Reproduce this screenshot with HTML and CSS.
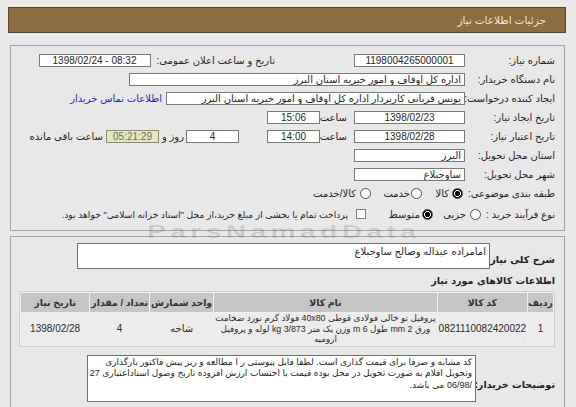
FILE: index.html
```html
<!DOCTYPE html>
<html lang="fa">
<head>
<meta charset="utf-8">
<link rel="stylesheet" href="styles.css">
</head>
<body>
<div class="page" dir="rtl">
  <div class="titlebar">جزئیات اطلاعات نیاز</div>

  <div class="panel p1">
    <div class="row">
      <span class="lbl">شماره نیاز:</span>
      <span class="fld w111 c">1198004265000001</span>
      <span class="lbl2 ml-pub">تاریخ و ساعت اعلان عمومی:</span>
      <span class="fld w112 c" dir="ltr">1398/02/24 - 08:32</span>
    </div>
    <div class="row">
      <span class="lbl">نام دستگاه خریدار:</span>
      <span class="fld w336">اداره کل اوقاف و امور خیریه استان البرز</span>
    </div>
    <div class="row">
      <span class="lbl">ایجاد کننده درخواست:</span>
      <span class="fld w299">یونس قربانی کاربردار اداره کل اوقاف و امور خیریه استان البرز</span>
      <span class="link">اطلاعات تماس خریدار</span>
    </div>
    <div class="row">
      <span class="lbl">تاریخ ایجاد نیاز:</span>
      <span class="fld w111 c">1398/02/23</span>
      <span class="txt t-hour m7">ساعت</span>
      <span class="fld w53 c m3">15:06</span>
    </div>
    <div class="row">
      <span class="lbl">تاریخ اعتبار نیاز:</span>
      <span class="fld w111 c">1398/02/28</span>
      <span class="txt t-hour m7">ساعت</span>
      <span class="fld w53 c m3">14:00</span>
      <span class="fld w53 c m28">4</span>
      <span class="txt t-day m2">روز و</span>
      <span class="fld w53 c m6 timer">05:21:29</span>
      <span class="txt m3">ساعت باقی مانده</span>
    </div>
    <div class="row">
      <span class="lbl">استان محل تحویل:</span>
      <span class="fld w111">البرز</span>
    </div>
    <div class="row">
      <span class="lbl">شهر محل تحویل:</span>
      <span class="fld w111">ساوجبلاغ</span>
    </div>
    <div class="row">
      <span class="lbl">طبقه بندی موضوعی:</span>
      <span class="radio on m4"></span>
      <span class="txt t-kala m3">کالا</span>
      <span class="radio m14"></span>
      <span class="txt t-khed m1">خدمت</span>
      <span class="radio m12"></span>
      <span class="txt m4">کالا/خدمت</span>
    </div>
    <div class="row last">
      <span class="lbl3">نوع فرآیند خرید :</span>
      <span class="radio m6"></span>
      <span class="txt t-joz m4">جزیی</span>
      <span class="radio on m13"></span>
      <span class="txt t-mot m2">متوسط</span>
      <span class="check m28"></span>
      <span class="txt small m8">پرداخت تمام یا بخشی از مبلغ خرید،از محل "اسناد خزانه اسلامی" خواهد بود.</span>
    </div>
  </div>

  <div class="panel p2">
    <div class="desc-row">
      <span class="blbl l-desc">شرح کلی نیاز:</span>
      <div class="box w413">امامزاده عبداله وصالح ساوجبلاغ</div>
    </div>
    <div class="heading">اطلاعات کالاهای مورد نیاز</div>
    <table class="items">
      <thead>
        <tr>
          <th class="c1">ردیف</th>
          <th class="c2">کد کالا</th>
          <th class="c3">نام کالا</th>
          <th class="c4">واحد شمارش</th>
          <th class="c5">تعداد / مقدار</th>
          <th class="c6">تاریخ نیاز</th>
        </tr>
      </thead>
      <tbody>
        <tr>
          <td>1</td>
          <td>0821110082420022</td>
          <td class="name">پروفیل تو خالی فولادی قوطی 40x80 فولاد گرم نورد ضخامت<br>ورق 2 mm طول 6 m وزن یک متر 3/873 kg لوله و پروفیل<br>ارومیه</td>
          <td>شاخه</td>
          <td>4</td>
          <td>1398/02/28</td>
        </tr>
      </tbody>
    </table>
    <div class="note-row">
      <span class="blbl l-note">توضیحات خریدار:</span>
      <div class="box w389 note">کد مشابه و صرفا برای قیمت گذاری است. لطفا فایل پیوستی ر ا مطالعه و ریز پیش فاکتور بارگذاری<br>وتحویل اقلام به صورت تحویل در محل بوده قیمت با احتساب ارزش افزوده تاریخ وصول اسناداعتباری 27<br>/06/98 می باشد.</div>
    </div>
  </div>

  <div class="watermark" dir="ltr">ParsNamadData</div>
</div>
</body>
</html>
```

FILE: styles.css
```css
* { box-sizing: border-box; }

html, body {
  margin: 0;
  background: #e8e8e8;
}

body {
  font-family: "Liberation Sans", "DejaVu Sans", sans-serif;
  font-size: 10px;
  color: #262626;
  overflow: hidden;
}

.page {
  position: relative;
  width: 558px;
  margin: 7px 0 0 8px;
}

.titlebar {
  height: 26px;
  background: #8c6c41;
  border: 1px solid #5f4526;
  color: #f2e8d4;
  font-size: 10.5px;
  display: flex;
  align-items: center;
  padding-right: 19px;
}

.panel {
  border: 1px solid #a5a5a5;
  margin: 12px 1px 0 2px;
  padding: 5px 9px 6px 0;
}

.row {
  display: flex;
  align-items: center;
  height: 19px;
  white-space: nowrap;
}

.row.last {
  margin-top: 1px;
  height: 20px;
}

.lbl {
  width: 88px;
  flex: none;
}

.lbl3 {
  width: 68px;
  flex: none;
}

.lbl2 {
  margin-left: 4px;
}

.ml-pub { margin-right: 79px; }

.fld {
  display: block;
  height: 13px;
  line-height: 11px;
  border: 1px solid #7a7a7a;
  background: #fff;
  padding: 0 3px;
  margin-right: 2px;
  overflow: hidden;
  white-space: nowrap;
  flex: none;
}

.fld.c { text-align: center; }

.w111 { width: 111px; }
.w112 { width: 112px; }
.w336 { width: 336px; }
.w299 { width: 299px; }
.w53 { width: 53px; }

.timer {
  background: #e6e6bf;
  color: #6e6e5a;
  border-color: #8a8a7a;
}

.link {
  color: #2b2ba6;
  margin-right: 4px;
}

.txt { flex: none; }
.small { font-size: 9.2px; }

.t-hour { width: 24px; }
.t-day { width: 19px; }
.t-kala { width: 13px; }
.t-khed { width: 27px; }
.t-joz { width: 20px; }
.t-mot { width: 26px; }

.m1 { margin-right: 1px; }
.m2 { margin-right: 2px; }
.m3 { margin-right: 3px; }
.m4 { margin-right: 4px; }
.m6 { margin-right: 6px; }
.m7 { margin-right: 7px; }
.m8 { margin-right: 8px; }
.m12 { margin-right: 12px; }
.m13 { margin-right: 13px; }
.m14 { margin-right: 14px; }
.m28 { margin-right: 28px; }

.radio {
  width: 11px;
  height: 11px;
  flex: none;
  border-radius: 50%;
  border: 1px solid #505050;
  background: #fff;
}

.radio.on {
  background: radial-gradient(circle, #000 0 2.4px, #fff 2.9px 3.2px, #000 3.7px);
}

.check {
  width: 10px;
  height: 10px;
  flex: none;
  border: 1px solid #7e7e7e;
  background: #fff;
}

.p2 {
  margin-top: 5px;
  padding: 6px 9px 8px 0;
}

.desc-row, .note-row {
  display: flex;
  align-items: center;
}

.blbl {
  font-family: "DejaVu Sans", sans-serif;
  font-weight: bold;
  font-size: 9.6px;
  color: #222;
  flex: none;
  white-space: nowrap;
}

.l-desc { width: 65px; padding-top: 6px; }
.l-note { width: 79px; padding-top: 12px; }

.box {
  background: #fff;
  border: 1px solid #6f6f6f;
  padding: 2px 3px;
  line-height: 11.5px;
  flex: none;
}

.w413 { width: 413px; height: 26px; }
.w389 { width: 389px; height: 47px; }

.note {
  font-size: 9px;
  white-space: nowrap;
  overflow: hidden;
  padding-top: 1px;
}

.heading {
  font-family: "DejaVu Sans", sans-serif;
  font-weight: bold;
  font-size: 9.6px;
  height: 14px;
  line-height: 14px;
  margin-top: 5px;
}

.items {
  margin-top: 3px;
  width: 536px;
  border-collapse: separate;
  border-spacing: 1px;
  border: 1px solid #cfcfcf;
  background: #f0f0f0;
  font-size: 10px;
}

.items th {
  background: #c6c6c6;
  height: 19px;
  font-weight: bold;
  font-size: 9.4px;
  color: #333;
  padding: 0;
}

.items td {
  background: #ececec;
  height: 31px;
  text-align: center;
  padding: 0 1px;
  color: #2a2a2a;
}

.items td.name {
  font-size: 8.8px;
  line-height: 10.5px;
  white-space: nowrap;
}

.c1 { width: 21px; }
.c2 { width: 75px; }
.c3 { width: 209px; }
.c4 { width: 74px; }
.c5 { width: 72px; }
.c6 { width: 75px; }

.note-row { margin-top: 8px; }

.watermark {
  position: absolute;
  left: 139px;
  top: 215px;
  line-height: 19px;
  font-family: "Liberation Sans", sans-serif;
  font-weight: bold;
  font-size: 19px;
  letter-spacing: 3px;
  color: rgba(0, 0, 0, 0.12);
  transform: scaleX(1.48);
  transform-origin: left top;
  pointer-events: none;
}
```
